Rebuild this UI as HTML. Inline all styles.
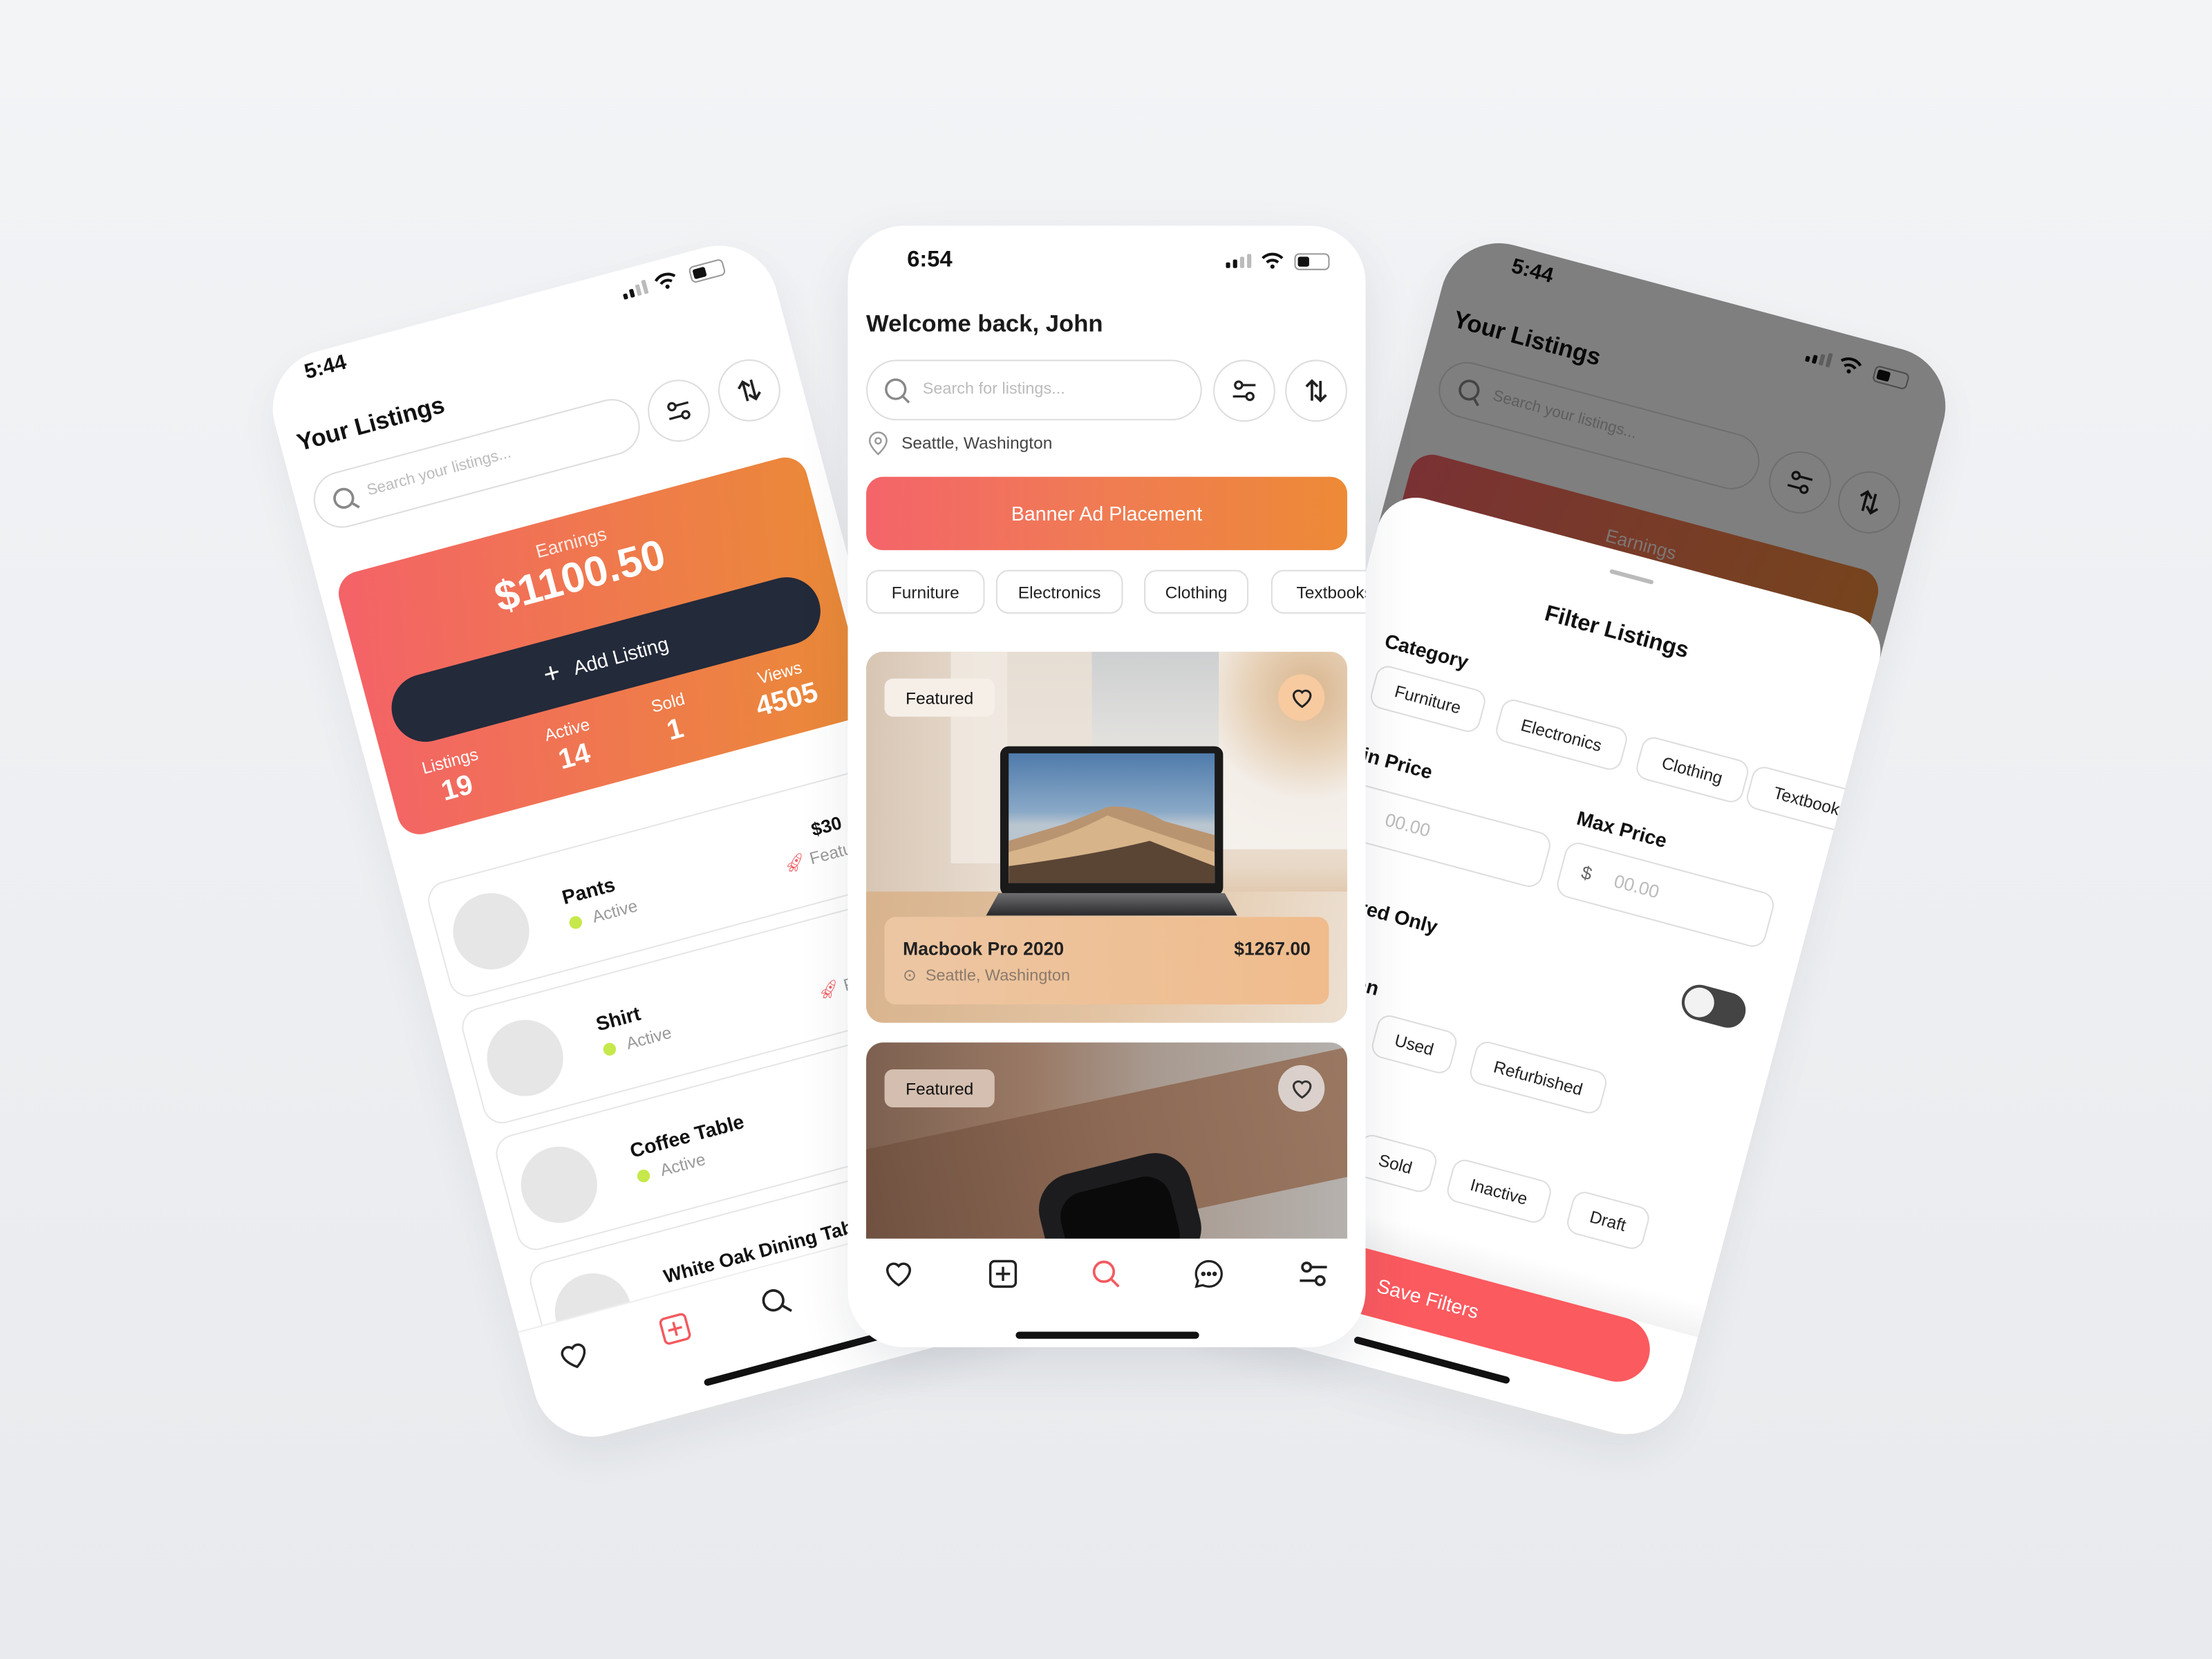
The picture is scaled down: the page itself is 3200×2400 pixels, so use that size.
<!DOCTYPE html>
<html><head><meta charset="utf-8"><style>
*{margin:0;padding:0;box-sizing:border-box}
html,body{width:3200px;height:2400px;overflow:hidden}
body{background:linear-gradient(180deg,#f3f4f6 0%,#eceef1 60%,#e8eaed 100%);font-family:"Liberation Sans",sans-serif;color:#111}
#s{position:absolute;left:0;top:0;width:1568px;height:1176px;transform:scale(2.040816);transform-origin:0 0}
.ph{position:absolute;width:368px;height:795px;background:#fff;border-radius:42px;overflow:hidden;transform-origin:0 0;box-shadow:0 12px 30px rgba(40,50,70,.07)}
.a{position:absolute}
.t{position:absolute;white-space:nowrap}
.circ{position:absolute;width:44px;height:44px;border:1.3px solid #ddd;border-radius:50%;display:flex;align-items:center;justify-content:center}
.chip{position:absolute;height:31px;border:1.3px solid #ddd;border-radius:9px;font-size:12px;display:flex;align-items:center;justify-content:center;color:#222;background:#fff;white-space:nowrap}
.row{position:absolute;left:17px;width:380px;height:84px;border:1.2px solid #e6e6e6;border-radius:14px;background:#fff}
.av{position:absolute;left:10px;top:15px;width:54px;height:54px;border-radius:50%;background:#e6e6e6}
.rt{position:absolute;left:92px;top:24px;font-size:14px;font-weight:bold;white-space:nowrap}
.rs{position:absolute;left:92px;top:44px;font-size:12px;color:#999;white-space:nowrap}
.rs i{display:inline-block;width:9px;height:9px;border-radius:50%;background:#c6e84b;margin-right:8px;vertical-align:-1px}
.lbl{position:absolute;font-size:14px;font-weight:bold;white-space:nowrap}
.inp{position:absolute;height:40px;border:1.3px solid #ddd;border-radius:10px;font-size:13px;color:#bbb}
</style></head><body><div id="s">

<!-- LEFT PHONE -->
<div class="ph" style="left:184px;top:260px;transform:rotate(-15deg)">
  <div class="t" style="left:30px;top:4px;font-size:15px;font-weight:bold">5:44</div>
  <svg class="a" style="left:262px;top:9px" width="80" height="14" viewBox="0 0 80 14"><rect x="0" y="8" width="3" height="4" rx="1" fill="#111"/><rect x="5" y="6" width="3" height="6" rx="1" fill="#111"/><rect x="10" y="4" width="3" height="8" rx="1" fill="#bbb"/><rect x="15" y="2" width="3" height="10" rx="1" fill="#bbb"/><path d="M25 5a10 10 0 0 1 14 0M28 8a6 6 0 0 1 8 0" stroke="#111" stroke-width="2" fill="none"/><circle cx="32" cy="11" r="1.5" fill="#111"/><rect x="50" y="2" width="24" height="11" rx="3" fill="none" stroke="#999"/><rect x="52" y="4" width="9" height="7" rx="1.5" fill="#111"/></svg>
  <div class="t" style="left:12px;top:50px;font-size:17px;font-weight:bold">Your Listings</div>
  <div class="a" style="left:12px;top:86px;width:238px;height:40px;border:1.3px solid #ddd;border-radius:20px">
    <svg class="a" style="left:12px;top:10px" width="20" height="20" viewBox="0 0 20 20"><circle cx="8.5" cy="8.5" r="6.5" stroke="#888" stroke-width="1.8" fill="none"/><path d="M13.5 13.5l4 4" stroke="#888" stroke-width="1.8"/></svg>
    <div class="t" style="left:38px;top:12px;font-size:11px;color:#bbb">Search your listings...</div>
  </div>
  <div class="circ" style="left:257px;top:85px"><svg width="20" height="20" viewBox="0 0 20 20" fill="none" stroke="#222" stroke-width="1.6"><circle cx="6" cy="6" r="2.5"/><path d="M8.5 6H18M2 14h9.5"/><circle cx="14" cy="14" r="2.5"/></svg></div>
  <div class="circ" style="left:309px;top:84px"><svg width="20" height="20" viewBox="0 0 20 20" fill="none" stroke="#222" stroke-width="1.8"><path d="M7 17V3M3 7l4-4 4 4M13 3v14M9 13l4 4 4-4"/></svg></div>
  <div class="a" style="left:12px;top:158px;width:343px;height:192px;border-radius:16px;background:linear-gradient(100deg,#f46268,#ef7a4c 55%,#ea8b36)">
    <div class="t" style="left:0;width:338px;text-align:center;top:12px;font-size:13px;color:rgba(255,255,255,.85)">Earnings</div>
    <div class="t" style="left:0;width:338px;text-align:center;top:28px;font-size:30px;font-weight:bold;color:#fff">$1100.50</div>
    <div class="a" style="left:15px;top:82px;width:313px;height:48px;border-radius:24px;background:#232a3a;color:#fff;font-size:14px;display:flex;align-items:center;justify-content:center"><span style="font-size:20px;margin-right:10px;font-weight:300">+</span>Add Listing</div>
    <div class="t" style="left:16px;width:60px;text-align:center;top:140px;font-size:12px;color:#fff">Listings</div>
    <div class="t" style="left:16px;width:60px;text-align:center;top:156px;font-size:20px;color:#fff;font-weight:bold">19</div>
    <div class="t" style="left:102px;width:60px;text-align:center;top:140px;font-size:12px;color:#fff">Active</div>
    <div class="t" style="left:102px;width:60px;text-align:center;top:156px;font-size:20px;color:#fff;font-weight:bold">14</div>
    <div class="t" style="left:176px;width:60px;text-align:center;top:140px;font-size:12px;color:#fff">Sold</div>
    <div class="t" style="left:176px;width:60px;text-align:center;top:156px;font-size:20px;color:#fff;font-weight:bold">1</div>
    <div class="t" style="left:258px;width:60px;text-align:center;top:140px;font-size:12px;color:#fff">Views</div>
    <div class="t" style="left:258px;width:60px;text-align:center;top:156px;font-size:20px;color:#fff;font-weight:bold">4505</div>
  </div>
  <div class="row" style="top:386px"><div class="av"></div><div class="rt">Pants</div><div class="rs"><i></i>Active</div>
    <div class="t" style="left:275px;top:24px;font-size:13px;font-weight:bold">$30</div>
    <div class="t" style="left:250px;top:44px;font-size:12px;color:#999"><span style="color:#f25a5f">🚀︎</span> Featured</div></div>
  <div class="row" style="top:479px"><div class="av"></div><div class="rt">Shirt</div><div class="rs"><i></i>Active</div>
    <div class="t" style="left:250px;top:44px;font-size:12px;color:#999"><span style="color:#f25a5f">🚀︎</span> Featured</div></div>
  <div class="row" style="top:572px"><div class="av"></div><div class="rt">Coffee Table</div><div class="rs"><i></i>Active</div></div>
  <div class="row" style="top:665px"><div class="av"></div><div class="rt" style="font-size:13.5px">White Oak Dining Table</div><div class="rs"><i></i>Active</div></div>
  <div class="a" style="left:0;top:708px;width:368px;height:87px;background:#fff;border-top:1px solid #eee">
    <svg class="a" style="left:22px;top:14px" width="24" height="24" viewBox="0 0 24 24" fill="none" stroke="#222" stroke-width="1.7"><path d="M12 20s-8-5-8-11a4.5 4.5 0 0 1 8-2.5A4.5 4.5 0 0 1 20 9c0 6-8 11-8 11z"/></svg>
    <svg class="a" style="left:96px;top:14px" width="24" height="24" viewBox="0 0 24 24" fill="none" stroke="#f25a5f" stroke-width="1.7"><rect x="3" y="3" width="18" height="18" rx="3"/><path d="M12 7v10M7 12h10"/></svg>
    <svg class="a" style="left:170px;top:14px" width="24" height="24" viewBox="0 0 24 24" fill="none" stroke="#222" stroke-width="1.8"><circle cx="10.5" cy="10.5" r="7"/><path d="M16 16l5 5"/></svg>
    <div class="a" style="left:118px;top:66px;width:132px;height:5px;border-radius:3px;background:#111"></div>
  </div>
</div>

<!-- RIGHT PHONE -->
<div class="ph" style="left:1033px;top:163px;transform:rotate(15deg)">
  <div class="t" style="left:44px;top:6px;font-size:15px;font-weight:bold">5:44</div>
  <svg class="a" style="left:262px;top:14px" width="80" height="14" viewBox="0 0 80 14"><rect x="0" y="8" width="3" height="4" rx="1" fill="#111"/><rect x="5" y="6" width="3" height="6" rx="1" fill="#111"/><rect x="10" y="4" width="3" height="8" rx="1" fill="#bbb"/><rect x="15" y="2" width="3" height="10" rx="1" fill="#bbb"/><path d="M25 5a10 10 0 0 1 14 0M28 8a6 6 0 0 1 8 0" stroke="#111" stroke-width="2" fill="none"/><circle cx="32" cy="11" r="1.5" fill="#111"/><rect x="50" y="2" width="24" height="11" rx="3" fill="none" stroke="#999"/><rect x="52" y="4" width="9" height="7" rx="1.5" fill="#111"/></svg>
  <div class="t" style="left:14px;top:52px;font-size:17px;font-weight:bold">Your Listings</div>
  <div class="a" style="left:16px;top:88px;width:234px;height:40px;border:1.3px solid #ddd;border-radius:20px">
    <svg class="a" style="left:12px;top:10px" width="20" height="20" viewBox="0 0 20 20"><circle cx="8.5" cy="8.5" r="6.5" stroke="#888" stroke-width="1.8" fill="none"/><path d="M13.5 13.5l4 4" stroke="#888" stroke-width="1.8"/></svg>
    <div class="t" style="left:38px;top:12px;font-size:11px;color:#bbb">Search your listings...</div>
  </div>
  <div class="circ" style="left:259px;top:88px"><svg width="20" height="20" viewBox="0 0 20 20" fill="none" stroke="#222" stroke-width="1.6"><circle cx="6" cy="6" r="2.5"/><path d="M8.5 6H18M2 14h9.5"/><circle cx="14" cy="14" r="2.5"/></svg></div>
  <div class="circ" style="left:310px;top:89px"><svg width="20" height="20" viewBox="0 0 20 20" fill="none" stroke="#222" stroke-width="1.8"><path d="M7 17V3M3 7l4-4 4 4M13 3v14M9 13l4 4 4-4"/></svg></div>
  <div class="a" style="left:12px;top:158px;width:343px;height:192px;border-radius:16px;background:linear-gradient(100deg,#f46268,#ef7a4c 55%,#ea8b36)">
    <div class="t" style="left:0;width:343px;text-align:center;top:16px;font-size:13px;color:rgba(255,255,255,.85)">Earnings</div>
  </div>
  <div class="a" style="left:0;top:0;width:368px;height:795px;background:rgba(0,0,0,.5)"></div>
  <div class="a" style="left:0;top:190px;width:368px;height:605px;background:#fff;border-radius:28px 28px 0 0">
    <div class="a" style="left:167px;top:14px;width:32px;height:3px;border-radius:2px;background:#bbb"></div>
    <div class="t" style="left:0;width:366px;text-align:center;top:48px;font-size:16px;font-weight:bold">Filter Listings</div>
    <div class="lbl" style="left:26px;top:96px">Category</div>
    <div class="chip" style="left:26px;top:121px;width:80px">Furniture</div>
    <div class="chip" style="left:118px;top:121px;width:92px">Electronics</div>
    <div class="chip" style="left:221px;top:121px;width:78px">Clothing</div>
    <div class="chip" style="left:302px;top:121px;width:90px">Textbooks</div>
    <div class="lbl" style="left:20px;top:178px">Min Price</div>
    <div class="lbl" style="left:190px;top:182px">Max Price</div>
    <div class="inp" style="left:20px;top:207px;width:157px"><span class="t" style="left:14px;top:11px;color:#666">$</span><span class="t" style="left:38px;top:11px">00.00</span></div>
    <div class="inp" style="left:188px;top:207px;width:153px"><span class="t" style="left:14px;top:11px;color:#666">$</span><span class="t" style="left:38px;top:11px">00.00</span></div>
    <div class="lbl" style="left:20px;top:283px">Featured Only</div>
    <div class="a" style="left:295px;top:282px;width:46px;height:25px;border-radius:13px;background:#444"><div class="a" style="left:2px;top:2px;width:21px;height:21px;border-radius:50%;background:#f2f2f2"></div></div>
    <div class="lbl" style="left:20px;top:336px">Condition</div>
    <div class="chip" style="left:20px;top:360px;width:54px">New</div>
    <div class="chip" style="left:91px;top:360px;width:58px">Used</div>
    <div class="chip" style="left:163px;top:360px;width:96px">Refurbished</div>
    <div class="lbl" style="left:20px;top:418px">Status</div>
    <div class="chip" style="left:20px;top:445px;width:64px">Active</div>
    <div class="chip" style="left:101px;top:445px;width:56px">Sold</div>
    <div class="chip" style="left:169px;top:445px;width:72px">Inactive</div>
    <div class="chip" style="left:257px;top:445px;width:56px">Draft</div>
    <div class="a" style="left:0;top:500px;width:368px;height:24px;background:linear-gradient(180deg,#fff,#f2f2f2)"></div>
    <div class="a" style="left:14px;top:524px;width:324px;height:46px;border-radius:23px;background:#fb5a5f;color:#fff;font-size:14px;display:flex;align-items:center;justify-content:center">Save Filters</div>
    <div class="a" style="left:133px;top:586px;width:114px;height:5px;border-radius:3px;background:#111"></div>
  </div>
</div>

<!-- CENTER PHONE -->
<div class="ph" style="left:601px;top:160px;width:367px;height:795px;border-radius:40px;box-shadow:0 14px 36px rgba(40,50,70,.10)">
  <div class="t" style="left:42px;top:16px;font-size:16px;font-weight:bold">6:54</div>
  <svg class="a" style="left:268px;top:18px" width="80" height="14" viewBox="0 0 80 14"><rect x="0" y="8" width="3" height="4" rx="1" fill="#111"/><rect x="5" y="6" width="3" height="6" rx="1" fill="#111"/><rect x="10" y="4" width="3" height="8" rx="1" fill="#bbb"/><rect x="15" y="2" width="3" height="10" rx="1" fill="#bbb"/><path d="M26 5a10 10 0 0 1 14 0M29 8a6 6 0 0 1 8 0" stroke="#111" stroke-width="2" fill="none"/><circle cx="33" cy="11" r="1.5" fill="#111"/><rect x="49" y="2" width="24" height="11" rx="3" fill="none" stroke="#999"/><rect x="51" y="4" width="8" height="7" rx="1.5" fill="#111"/></svg>
  <div class="t" style="left:13px;top:60px;font-size:17px;font-weight:bold;color:#1a1a1a">Welcome back, John</div>
  <div class="a" style="left:13px;top:95px;width:238px;height:43px;border:1.3px solid #ddd;border-radius:22px">
    <svg class="a" style="left:11px;top:11px" width="21" height="21" viewBox="0 0 20 20"><circle cx="8.5" cy="8.5" r="6.5" stroke="#888" stroke-width="1.6" fill="none"/><path d="M13.5 13.5l4 4" stroke="#888" stroke-width="1.6"/></svg>
    <div class="t" style="left:39px;top:14px;font-size:11.5px;color:#bbb">Search for listings...</div>
  </div>
  <div class="circ" style="left:259px;top:95px"><svg width="20" height="20" viewBox="0 0 20 20" fill="none" stroke="#222" stroke-width="1.6"><circle cx="6" cy="6" r="2.5"/><path d="M8.5 6H18M2 14h9.5"/><circle cx="14" cy="14" r="2.5"/></svg></div>
  <div class="circ" style="left:310px;top:95px"><svg width="20" height="20" viewBox="0 0 20 20" fill="none" stroke="#222" stroke-width="1.8"><path d="M7 17V3M3 7l4-4 4 4M13 3v14M9 13l4 4 4-4"/></svg></div>
  <svg class="a" style="left:14px;top:146px" width="15" height="17" viewBox="0 0 15 17" fill="none" stroke="#999" stroke-width="1.2"><path d="M7.5 16s-6-5.5-6-9.5a6 6 0 0 1 12 0c0 4-6 9.5-6 9.5z"/><circle cx="7.5" cy="6.5" r="2"/></svg>
  <div class="t" style="left:38px;top:147px;font-size:12px;color:#444">Seattle, Washington</div>
  <div class="a" style="left:13px;top:178px;width:341px;height:52px;border-radius:12px;background:linear-gradient(90deg,#f4646a,#f07a55 45%,#ed8a36);color:#fff;font-size:14px;display:flex;align-items:center;justify-content:center">Banner Ad Placement</div>
  <div class="chip" style="left:13px;top:244px;width:84px">Furniture</div>
  <div class="chip" style="left:105px;top:244px;width:90px">Electronics</div>
  <div class="chip" style="left:210px;top:244px;width:74px">Clothing</div>
  <div class="chip" style="left:300px;top:244px;width:90px">Textbooks</div>
  <!-- card 1 -->
  <div class="a" style="left:13px;top:302px;width:341px;height:263px;border-radius:12px;overflow:hidden;background:linear-gradient(180deg,#e6ddd3 0%,#ede6dd 40%,#e8d8c6 58%,#dcbf9f 70%,#d9b896 100%)">
    <div class="a" style="left:0;top:0;width:100px;height:170px;background:linear-gradient(90deg,#d8c6b4,#e9ded2)"></div>
    <div class="a" style="left:60px;top:0;width:40px;height:150px;background:#f1ebe4;opacity:.8"></div>
    <div class="a" style="left:160px;top:0;width:110px;height:70px;background:linear-gradient(180deg,#c7ccd0,#e2e2e0);opacity:.8"></div>
    <div class="a" style="left:250px;top:0;width:91px;height:140px;background:radial-gradient(circle at 70% 20%,#d8b58e 0,#e6cfb4 30%,#f3eee8 60%,#f5f1ec 100%)"></div>
    <div class="a" style="left:0;top:170px;width:341px;height:93px;background:linear-gradient(100deg,#d8b38d,#e2c3a2 50%,#ece0d2 100%)"></div>
    <div class="a" style="left:95px;top:67px;width:158px;height:106px;border-radius:6px;background:#1a1a1a"></div>
    <div class="a" style="left:101px;top:72px;width:146px;height:92px;background:linear-gradient(180deg,#4f7bab,#8aa9c7 45%,#b9c5cf 55%)">
      <svg class="a" style="left:0;top:0" width="146" height="92" viewBox="0 0 146 92"><path d="M0 62 L40 50 L70 38 Q90 36 110 48 L146 58 V92 H0z" fill="#b99470"/><path d="M0 70 Q40 60 70 44 Q100 55 146 70 V92 H0z" fill="#d8b48a"/><path d="M0 80 Q60 72 100 62 Q120 70 146 80 V92 H0z" fill="#5a4535"/></svg>
    </div>
    <div class="a" style="left:85px;top:171px;width:178px;height:16px;background:linear-gradient(180deg,#6e6e70,#2a2a2c);clip-path:polygon(5% 0,95% 0,100% 100%,0 100%)"></div>
    <div class="a" style="left:13px;top:188px;width:315px;height:62px;border-radius:8px;background:linear-gradient(90deg,rgba(238,200,165,.92),rgba(240,185,135,.92))">
      <div class="t" style="left:13px;top:15px;font-size:13px;font-weight:bold;color:#222">Macbook Pro 2020</div>
      <div class="t" style="right:13px;top:15px;font-size:13px;font-weight:bold;color:#222">$1267.00</div>
      <div class="t" style="left:13px;top:34px;font-size:11.5px;color:#8a7a6c">⊙&nbsp;&nbsp;Seattle, Washington</div>
    </div>
    <div class="a" style="left:13px;top:19px;width:78px;height:27px;border-radius:6px;background:#f5efe8;font-size:12px;display:flex;align-items:center;justify-content:center">Featured</div>
    <div class="a" style="left:292px;top:16px;width:33px;height:33px;border-radius:50%;background:#f8caa0;display:flex;align-items:center;justify-content:center"><svg width="18" height="18" viewBox="0 0 24 24" fill="none" stroke="#222" stroke-width="2"><path d="M12 20s-8-5-8-11a4.5 4.5 0 0 1 8-2.5A4.5 4.5 0 0 1 20 9c0 6-8 11-8 11z"/></svg></div>
  </div>
  <!-- card 2 -->
  <div class="a" style="left:13px;top:579px;width:341px;height:150px;border-radius:12px;overflow:hidden;background:linear-gradient(90deg,#7d6050,#9a7a66 35%,#a89a90 60%,#b5b1ad 100%)">
    <div class="a" style="left:-20px;top:80px;width:400px;height:90px;background:linear-gradient(90deg,#6f5040,#8d6a55 50%,#9c7a64);transform:rotate(-12deg);transform-origin:0 0"></div>
    <div class="a" style="left:125px;top:85px;width:110px;height:80px;border-radius:26px;background:#1c1c1e;transform:rotate(-14deg)"></div>
    <div class="a" style="left:140px;top:100px;width:80px;height:60px;border-radius:18px;background:#0a0a0a;transform:rotate(-14deg)"></div>
    <div class="a" style="left:13px;top:19px;width:78px;height:27px;border-radius:6px;background:rgba(220,200,185,.9);font-size:12px;display:flex;align-items:center;justify-content:center">Featured</div>
    <div class="a" style="left:292px;top:16px;width:33px;height:33px;border-radius:50%;background:rgba(230,225,222,.85);display:flex;align-items:center;justify-content:center"><svg width="18" height="18" viewBox="0 0 24 24" fill="none" stroke="#333" stroke-width="2"><path d="M12 20s-8-5-8-11a4.5 4.5 0 0 1 8-2.5A4.5 4.5 0 0 1 20 9c0 6-8 11-8 11z"/></svg></div>
  </div>
  <!-- nav -->
  <div class="a" style="left:0;top:718px;width:367px;height:77px;background:#fff">
    <svg class="a" style="left:24px;top:13px" width="24" height="24" viewBox="0 0 24 24" fill="none" stroke="#222" stroke-width="1.7"><path d="M12 20s-8-5-8-11a4.5 4.5 0 0 1 8-2.5A4.5 4.5 0 0 1 20 9c0 6-8 11-8 11z"/></svg>
    <svg class="a" style="left:98px;top:13px" width="24" height="24" viewBox="0 0 24 24" fill="none" stroke="#222" stroke-width="1.7"><rect x="3" y="3" width="18" height="18" rx="3"/><path d="M12 7v10M7 12h10"/></svg>
    <svg class="a" style="left:171px;top:13px" width="24" height="24" viewBox="0 0 24 24" fill="none" stroke="#f25a5f" stroke-width="1.8"><circle cx="10.5" cy="10.5" r="7"/><path d="M16 16l5 5"/></svg>
    <svg class="a" style="left:244px;top:13px" width="24" height="24" viewBox="0 0 24 24" fill="none" stroke="#222" stroke-width="1.6"><path d="M12 3a9 9 0 0 1 0 18c-1.6 0-3-.4-4.3-1L3 21l1.2-4.2A9 9 0 0 1 12 3z"/><circle cx="8" cy="12" r=".8" fill="#222"/><circle cx="12" cy="12" r=".8" fill="#222"/><circle cx="16" cy="12" r=".8" fill="#222"/></svg>
    <svg class="a" style="left:318px;top:13px" width="24" height="24" viewBox="0 0 20 20" fill="none" stroke="#222" stroke-width="1.5"><circle cx="6" cy="6" r="2.5"/><path d="M8.5 6H18M2 14h9.5"/><circle cx="14" cy="14" r="2.5"/></svg>
    <div class="a" style="left:119px;top:66px;width:130px;height:5px;border-radius:3px;background:#111"></div>
  </div>
</div>

</div></body></html>
